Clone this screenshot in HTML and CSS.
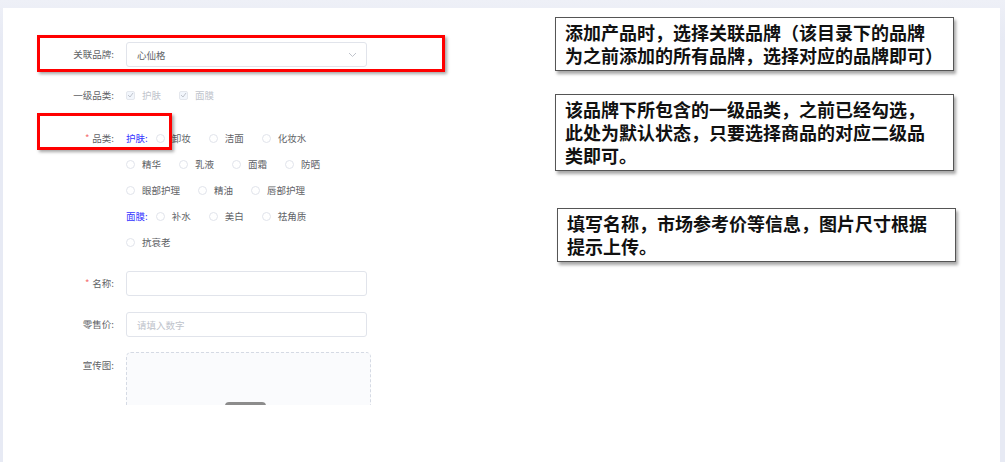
FILE: index.html
```html
<!DOCTYPE html>
<html lang="zh-CN">

<head>
    <meta charset="UTF-8">
    <meta name="viewport" content="width=device-width, initial-scale=1.0">
    <title>添加产品</title>
    <link rel="stylesheet" href="styles.css">
</head>

<body>
<div class="page">
    <div class="panel">
        <div class="form-col">
            <div class="item item-select">
                <label class="label">关联品牌:</label>
                <div class="select">
                    <span>心仙格</span>
                    <svg class="arrow" width="9" height="6" viewBox="0 0 9 6"><path d="M1 1 L4.5 4.5 L8 1" fill="none" stroke="#c0c4cc" stroke-width="1"/></svg>
                </div>
            </div>

            <div class="item item-check">
                <label class="label">一级品类:</label>
                <div class="checks">
                    <span class="check"><i class="box"><svg width="7" height="6" viewBox="0 0 7 6"><path d="M1 3 L3 5 L6 1" fill="none" stroke="#c0c4cc" stroke-width="1"/></svg></i>护肤</span>
                    <span class="check"><i class="box"><svg width="7" height="6" viewBox="0 0 7 6"><path d="M1 3 L3 5 L6 1" fill="none" stroke="#c0c4cc" stroke-width="1"/></svg></i>面膜</span>
                </div>
            </div>

            <div class="item item-cat">
                <label class="label"><em>*</em>品类:</label>
                <div class="cats">
                    <div class="cat-row">
                        <span class="group">护肤:</span>
                        <span class="radio"><i></i>卸妆</span>
                        <span class="radio"><i></i>洁面</span>
                        <span class="radio"><i></i>化妆水</span>
                    </div>
                    <div class="cat-row">
                        <span class="radio"><i></i>精华</span>
                        <span class="radio"><i></i>乳液</span>
                        <span class="radio"><i></i>面霜</span>
                        <span class="radio"><i></i>防晒</span>
                    </div>
                    <div class="cat-row">
                        <span class="radio"><i></i>眼部护理</span>
                        <span class="radio"><i></i>精油</span>
                        <span class="radio"><i></i>唇部护理</span>
                    </div>
                    <div class="cat-row">
                        <span class="group">面膜:</span>
                        <span class="radio"><i></i>补水</span>
                        <span class="radio"><i></i>美白</span>
                        <span class="radio"><i></i>祛角质</span>
                    </div>
                    <div class="cat-row">
                        <span class="radio"><i></i>抗衰老</span>
                    </div>
                </div>
            </div>

            <div class="item item-input">
                <label class="label"><em>*</em>名称:</label>
                <div class="input"></div>
            </div>

            <div class="item item-input item-price">
                <label class="label">零售价:</label>
                <div class="input placeholder">请填入数字</div>
            </div>

            <div class="item item-upload">
                <label class="label">宣传图:</label>
                <div class="upload">
                    <div class="upload-icon"></div>
                </div>
            </div>
        </div>

        <div class="notes">
            <div class="note">添加产品时，选择关联品牌（该目录下的品牌<br>为之前添加的所有品牌，选择对应的品牌即可）</div>
            <div class="note note-cat">该品牌下所包含的一级品类，之前已经勾选，<br>此处为默认状态，只要选择商品的对应二级品<br>类即可。</div>
            <div class="note note-info">填写名称，市场参考价等信息，图片尺寸根据<br>提示上传。</div>
        </div>

        <!-- 红色标注框 -->
        <div class="mark mark-brand"></div>
        <div class="mark mark-cat"></div>
    </div>
</div>
</body>
</html>
```

FILE: styles.css
```css
body {
    margin: 0;
    padding: 0;
    background-color: #e9ecf5;
    font-family: "Noto Sans CJK SC", "Noto Sans", sans-serif;
}

.page {
    padding: 8px 5px 0 3px;
    height: 462px;
    box-sizing: border-box;
    background: linear-gradient(#eef0f7, #e7eaf4 40px);
}

.panel {
    position: relative;
    display: flex;
    height: 454px;
    background-color: #fff;
}

/* 表单部分 */
.form-col {
    width: 552px;
    height: 397px;
    padding: 34px 0 0 11px;
    box-sizing: border-box;
    overflow: hidden;
    font-size: 9.5px;
    color: #606266;
}

.item {
    display: flex;
    align-items: flex-start;
}

.label {
    width: 112px;
    flex: none;
    padding-right: 12px;
    box-sizing: border-box;
    text-align: right;
    line-height: 26px;
}

.label em {
    font-style: normal;
    color: #f56c6c;
    margin-right: 3px;
}

.item-select {
    margin-bottom: 15px;
}

.item-select .label,
.item-input .label {
    line-height: 25px;
}

.select,
.input {
    width: 241px;
    height: 25px;
    border: 1px solid #e1e4eb;
    border-radius: 3px;
    box-sizing: border-box;
    display: flex;
    align-items: center;
    justify-content: space-between;
    padding: 0 9px 0 10px;
}

.arrow {
    margin-top: 1px;
}

.item-check {
    margin-bottom: 17px;
}

.checks {
    display: flex;
    line-height: 26px;
    height: 26px;
    align-items: center;
    color: #c0c4cc;
}

.check {
    display: flex;
    align-items: center;
    margin-right: 18px;
}

.check .box {
    width: 9px;
    height: 9px;
    border: 1px solid #e4e7ed;
    background-color: #f2f6fc;
    border-radius: 2px;
    box-sizing: border-box;
    display: flex;
    align-items: center;
    justify-content: center;
    margin-right: 7px;
}

.item-cat {
    margin-bottom: 16px;
}

.cat-row {
    display: flex;
    align-items: center;
    height: 26px;
}

.group {
    color: #3333ff;
    margin-right: 8px;
}

.radio {
    display: flex;
    align-items: center;
    margin-right: 18px;
}

.radio i {
    width: 9px;
    height: 9px;
    border: 1px solid #e1e4eb;
    border-radius: 50%;
    box-sizing: border-box;
    margin-right: 7px;
}

.item-input {
    margin-bottom: 16px;
}

.item-price {
    margin-bottom: 15px;
}

.placeholder {
    color: #c0c4cc;
}

.upload {
    position: relative;
    width: 245px;
    height: 120px;
    border: 1px dashed #d5dae4;
    border-radius: 5px;
    background-color: #fafbfd;
    box-sizing: border-box;
}

.upload-icon {
    position: absolute;
    left: 98px;
    top: 49px;
    width: 41px;
    height: 30px;
    border: 3px solid #8c8c8c;
    border-radius: 4px;
    box-sizing: border-box;
}

.item-upload .label {
    line-height: 26px;
}

/* 说明文字 */
.notes {
    padding-top: 9px;
    width: 401px;
}

.note {
    width: 399px;
    border: 1px solid #555;
    box-sizing: border-box;
    padding: 3px 4px 3px 9px;
    font-size: 18px;
    font-weight: bold;
    line-height: 23px;
    color: #111;
    white-space: nowrap;
    box-shadow: 2px 3px 3px rgba(0, 0, 0, 0.35);
}

.note-cat {
    margin-top: 23px;
}

.note-info {
    margin-top: 37px;
    margin-left: 2px;
}

/* 红框 */
.mark {
    position: absolute;
    left: 34px;
    border: 3px solid #ff0000;
    box-sizing: border-box;
    box-shadow: 2px 2px 3px rgba(0, 0, 0, 0.35);
}

.mark-brand {
    top: 27px;
    width: 408px;
    height: 37px;
}

.mark-cat {
    top: 105px;
    width: 135px;
    height: 37px;
}
```
